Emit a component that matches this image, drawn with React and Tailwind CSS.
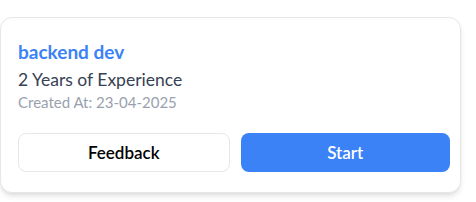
import React from "react";

const InterviewCard = ({ role, years, createdAt }) => {
  return (
    <div className="w-[461px] h-[176px] mt-[17px] bg-white border border-gray-200 rounded-xl shadow-md pl-[17px] pr-[10px] pt-[22px]">
      <h2 className="text-[19px] leading-[24px] font-bold text-[#3b82f6]">{role}</h2>
      <p className="text-[17.5px] leading-[24px] text-gray-700 mt-[4px]">{years} Years of Experience</p>
      <p className="text-[15px] leading-[20px] text-gray-400">Created At: {createdAt}</p>
      <div className="flex gap-[11px] mt-[21px]">
        <button className="flex-1 h-[39px] rounded-lg border border-gray-200 bg-white text-black text-[17px] font-semibold">
          Feedback
        </button>
        <button className="flex-1 h-[39px] rounded-lg bg-[#3b82f6] text-white text-[17px] font-semibold">
          Start
        </button>
      </div>
    </div>
  );
};

export default function App() {
  return (
    <div className="w-[476px] h-[202px] bg-white overflow-hidden" style={{ fontFamily: "Lato, 'Noto Sans', sans-serif" }}>
      <InterviewCard role="backend dev" years={2} createdAt="23-04-2025" />
    </div>
  );
}
